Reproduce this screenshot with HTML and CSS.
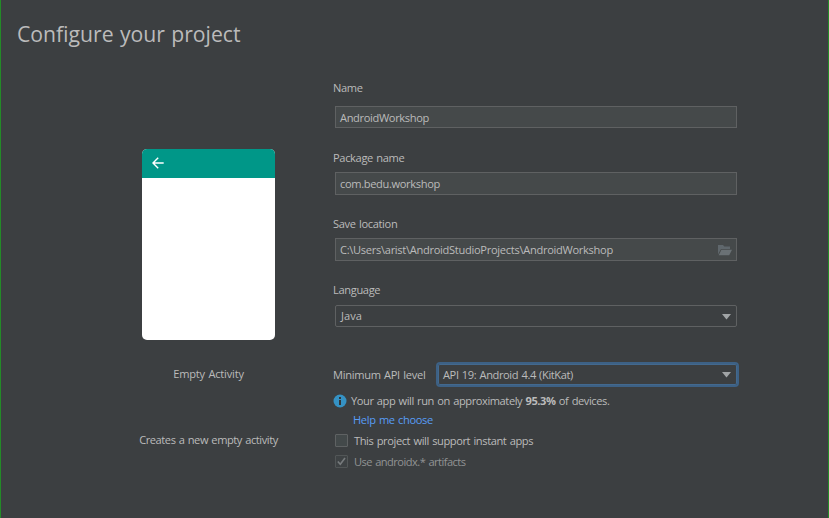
FILE: index.html
```html
<!DOCTYPE html>
<html lang="en">
<head>
<meta charset="utf-8">
<title>Configure your project</title>
<link rel="stylesheet" href="styles.css">
</head>
<body>
<div class="wizard">
  <h1 class="title">Configure your project</h1>
  <div class="content">
    <section class="template">
      <div class="phone">
        <div class="appbar">
          <svg width="12" height="12" viewBox="0 0 12 12"><path d="M11.7 6H1M6.2.8 1 6l5.200 5.200" fill="none" stroke="#fff" stroke-width="1.4"/></svg>
        </div>
      </div>
      <p class="template-name"><span class="t-empty">Empty Activity</span></p>
      <p class="template-desc"><span class="t-desc">Creates a new empty activity</span></p>
    </section>
    <section class="form">
      <div class="field name"><label>Name</label><div class="box"><span class="t-name">AndroidWorkshop</span></div></div>
      <div class="field package"><label>Package name</label><div class="box"><span class="t-pkg">com.bedu.workshop</span></div></div>
      <div class="field location"><label>Save location</label><div class="box"><span class="t-path">C:\Users\arist\AndroidStudioProjects\AndroidWorkshop</span>
        <svg class="folder" width="14" height="11" viewBox="0 0 14 11"><path d="M0 0h5l1.300 1.500H12V4H3L0 9.500z" fill="#5f676c"/><path d="M3.400 4.800H14L11.200 10.300H.7z" fill="#6a7175"/></svg></div></div>
      <div class="field language"><label>Language</label><div class="box select"><span class="t-java">Java</span><svg class="arrow" width="9" height="6" viewBox="0 0 9 6"><path d="M0 0h9L4.500 5.500z" fill="#a1a4a6"/></svg></div></div>
      <div class="api"><label class="t-api">Minimum API level</label><div class="box select focused"><span class="t-kitkat">API 19: Android 4.4 (KitKat)</span><svg class="arrow" width="9" height="6" viewBox="0 0 9 6"><path d="M0 0h9L4.500 5.500z" fill="#a1a4a6"/></svg></div></div>
      <div class="info"><svg width="14" height="14" viewBox="0 0 14 14"><circle cx="7" cy="7" r="6.500" fill="#3592c4"/><path d="M6 3h2v2H6zM6 6h2v5H6z" fill="#323638"/></svg><span class="t-info">Your app will run on approximately <b>95.3%</b> of devices.</span></div>
      <a class="help"><span class="t-help">Help me choose</span></a>
      <div class="check"><i class="tick"></i><span class="t-instant">This project will support instant apps</span></div>
      <div class="check disabled"><i class="tick"><svg width="11" height="11" viewBox="0 0 11 11"><path d="M1.800 5.500 4.300 8.300 9 2" fill="none" stroke="#777b7d" stroke-width="1.600"/></svg></i><span class="t-androidx">Use androidx.* artifacts</span></div>
    </section>
  </div>
</div>
</body>
</html>
```
FILE: styles.css
```css
* { box-sizing: border-box; }
body { margin: 0; background: #3c3f41; color: #bbb; font: 11.1px/16px "Open Sans", "Noto Sans", sans-serif; letter-spacing: -0.35px; word-spacing: 0.8px; }
svg { display: block; flex: none; }
.wizard { width: 829px; height: 518px; border: solid #238b27; border-width: 0 1px; overflow: hidden; }
.title { margin: 0; padding: 19px 0 0 16px; height: 80px; font-size: 21.2px; line-height: 30px; font-weight: 400; letter-spacing: 0; }
.title, span, label { white-space: nowrap; }
.content { display: flex; }
.template { width: 332px; padding: 69px 0 0 141px; }
.phone { width: 133px; height: 191px; border-radius: 5px; background: #fff; overflow: hidden; }
.appbar { height: 29px; background: #009788; padding: 8px 0 0 10px; }
.template-name, .template-desc { width: 133px; margin: 0; display: flex; justify-content: center; }
.template-name { margin-top: 26px; }
.template-desc { margin-top: 50px; }
.form { width: 406px; }
.field { display: flex; flex-direction: column; }
.name { height: 70px; gap: 10px; }
.package, .location { height: 66px; gap: 6px; }
.language { height: 80px; gap: 7px; }
.box { display: flex; align-items: center; justify-content: space-between; width: 402px; height: 23px; margin-left: 2px; padding: 1px 4px 0; border: 1px solid #5f6162; background: #45494a; }
.name .box, .language .box { height: 22px; }
.language .box { padding-top: 0; padding-left: 5px; }
.select { background: #3c3f41; border-radius: 2px; padding-right: 5px; }
.arrow { margin-top: 1px; }
.api { display: flex; align-items: center; justify-content: space-between; height: 25px; }
.api .focused { flex: none; width: 303px; height: 25px; margin: 0; padding: 0 6px 0 5px; border: 2px solid #3d6185; border-radius: 4px; box-shadow: inset 0 0 0 1px #43698e; }
.info { display: flex; align-items: center; gap: 4px; height: 20px; margin-top: 4px; }
.help { display: block; height: 16px; margin: 1px 0 0 20px; color: #589df6; }
.check { display: flex; align-items: center; gap: 6px; height: 21px; margin: 2px 0 0 2px; }
.check + .check { margin-top: 0; }
.tick { width: 13px; height: 13px; border: 1px solid #5f6263; border-radius: 1px; background: #43494a; flex: none; }
.disabled { color: #919394; }
.disabled .tick { border-color: #525657; background: #3e4244; }
.t-empty { letter-spacing: -0.2px; }
.t-desc { letter-spacing: -0.43px; }
.t-path { letter-spacing: -0.3px; }
.t-java { letter-spacing: 0; }
.t-api { letter-spacing: -0.3px; }
.t-kitkat, .t-instant { letter-spacing: -0.4px; }
.t-info { letter-spacing: -0.42px; }
.t-androidx { letter-spacing: -0.53px; }
```
